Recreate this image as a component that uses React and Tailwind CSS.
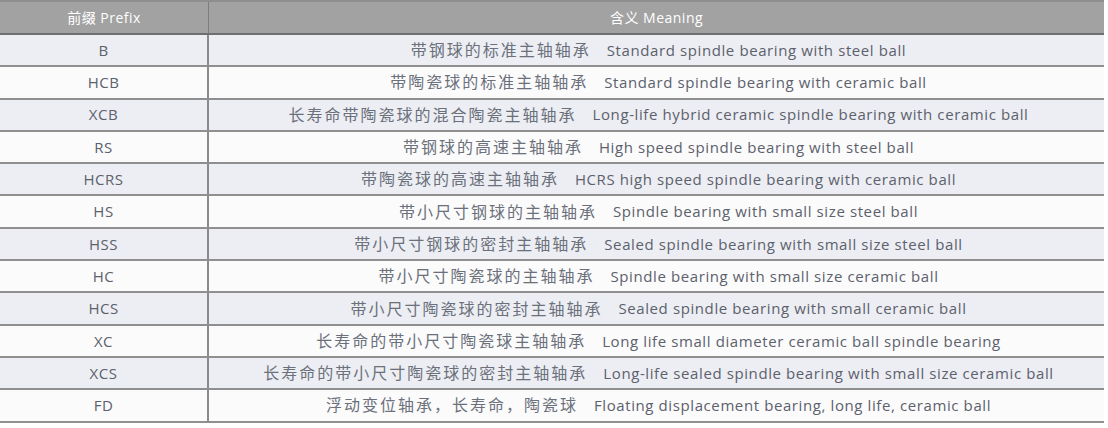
import React from "react";

const rows = [
  ["B", "带钢球的标准主轴轴承", "Standard spindle bearing with steel ball"],
  ["HCB", "带陶瓷球的标准主轴轴承", "Standard spindle bearing with ceramic ball"],
  ["XCB", "长寿命带陶瓷球的混合陶瓷主轴轴承", "Long-life hybrid ceramic spindle bearing with ceramic ball"],
  ["RS", "带钢球的高速主轴轴承", "High speed spindle bearing with steel ball"],
  ["HCRS", "带陶瓷球的高速主轴轴承", "HCRS high speed spindle bearing with ceramic ball"],
  ["HS", "带小尺寸钢球的主轴轴承", "Spindle bearing with small size steel ball"],
  ["HSS", "带小尺寸钢球的密封主轴轴承", "Sealed spindle bearing with small size steel ball"],
  ["HC", "带小尺寸陶瓷球的主轴轴承", "Spindle bearing with small size ceramic ball"],
  ["HCS", "带小尺寸陶瓷球的密封主轴轴承", "Sealed spindle bearing with small ceramic ball"],
  ["XC", "长寿命的带小尺寸陶瓷球主轴轴承", "Long life small diameter ceramic ball spindle bearing"],
  ["XCS", "长寿命的带小尺寸陶瓷球的密封主轴轴承", "Long-life sealed spindle bearing with small size ceramic ball"],
  ["FD", "浮动变位轴承，长寿命，陶瓷球", "Floating displacement bearing, long life, ceramic ball"],
];

const font = { fontFamily: '"Open Sans", "Noto Sans CJK SC", sans-serif' };

export default function App() {
  return (
    <div className="w-[1108px] h-[428px] bg-white overflow-hidden" style={font}>
      <div className="w-[1104px] border-t-2 border-[#8e8e8e]">
        <div className="flex h-[33px] bg-[#a2a2a2] border-b-2 border-[#6f6f6f] text-white text-[14px] tracking-[0.5px]">
          <div className="w-[209px] flex items-center justify-center border-r border-[#7d7d7d]">
            前缀 Prefix
          </div>
          <div className="flex-1 flex items-center justify-center">含义 Meaning</div>
        </div>
        {rows.map(([code, zh, en], i) => (
          <div
            key={code}
            className={`flex h-[32.3px] border-b-2 border-[#8f8f8f] text-[#5c616b] ${
              i % 2 === 0 ? "bg-[#eceef4]" : "bg-[#fbfbfc]"
            }`}
          >
            <div className="w-[209px] flex items-center justify-center border-r-2 border-[#8a8a8a] text-[15px] tracking-[0.5px]">
              {code}
            </div>
            <div className="flex-1 flex items-center justify-center gap-[16px] whitespace-nowrap pl-[4px]">
              <span className="text-[16px] tracking-[2px] text-[#6b707a]">{zh}</span>
              <span className="text-[15px] tracking-[0.6px]">{en}</span>
            </div>
          </div>
        ))}
      </div>
    </div>
  );
}
